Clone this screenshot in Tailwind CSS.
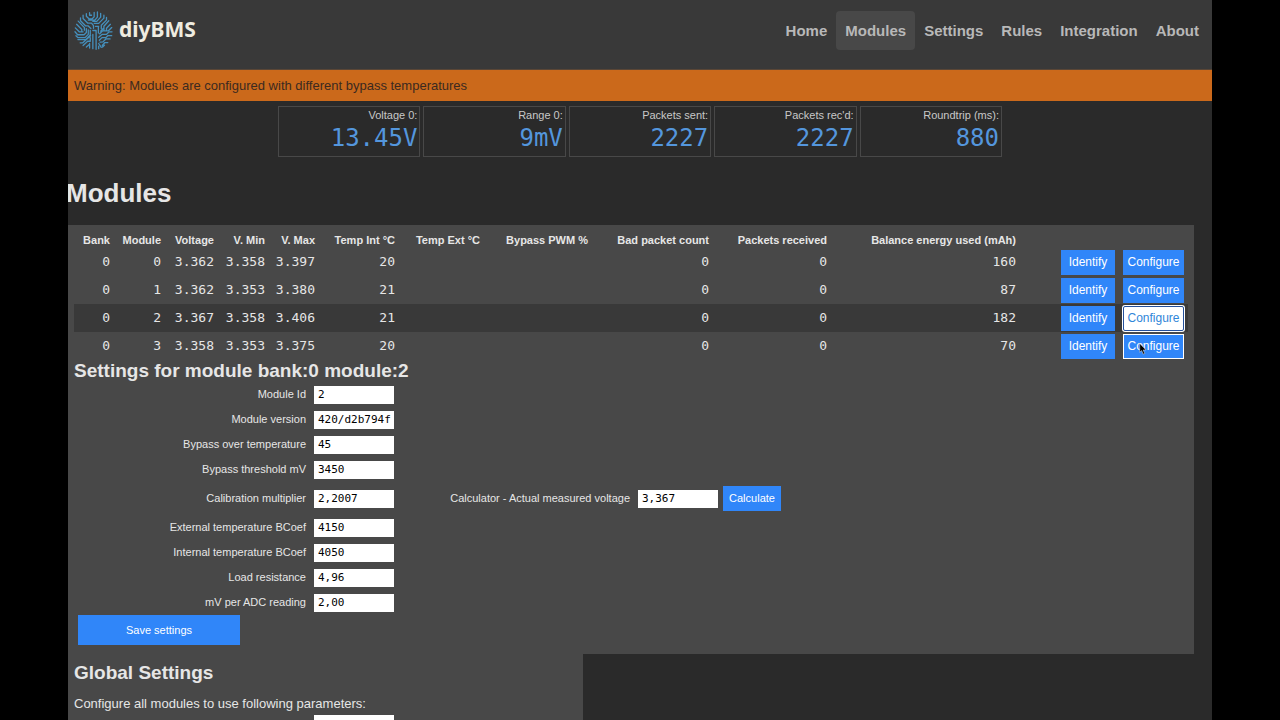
<!DOCTYPE html>
<html lang="en">
<head>
  <meta charset="UTF-8" />
  <meta name="viewport" content="width=device-width, initial-scale=1.0"/>
  <title>diyBMS - Modules</title>
  <script src="https://cdn.jsdelivr.net/npm/@tailwindcss/browser@4"></script>
</head>
<body class="bg-black font-['Liberation_Sans',Arial,sans-serif] text-[#e6e6e6]">
  <div class="mx-[68px] min-h-screen bg-[#2a2a2a] overflow-hidden">

    <!-- Header -->
    <header class="flex items-start justify-between bg-[#393939] border-b border-[#5a4636] h-[70px] pt-[11px] pl-1.5 pr-1">
      <a href="#" class="flex items-start gap-1.5">
        <svg class="size-[39px]" viewBox="0 0 120 120" fill="none" stroke="#4590bd" stroke-width="4" stroke-linecap="round" stroke-linejoin="round" aria-hidden="true">
          <path d="M38 8v8l8 8h10l6-6V4M48 5v8h6M72 3v16l-8 9H44M82 7v12L70 32H58M92 13v9L76 38H62"/>
          <path d="M28 13v10l14 14h12l6 8v8M20 21v9l16 16h8l8 8M13 31l19 20v8M8 41l16 16v6M4 52l12 12h12"/>
          <path d="M100 20v8L84 44v10M107 30l-15 17v12M112 41l-12 12v8M82 62l8-8M116 51l-10 10H88l-9 9"/>
          <path d="M3 64l8 9h20l7-7V54M6 76l6 6h22l10-10V58M12 88h24l14-14V60M19 98h8l24-22M58 60h10v58M28 106l14-13h8V82"/>
          <path d="M75 50v18M66 47h10M117 64h-9l-8 8H86l-10 9M116 76h-12l-6 6H86l-8 8M111 86H98l-9 9-9 1M104 97h-9l-8 9M58 72v44M48 100v14M38 111l10-9M76 100l8 12M76 108v8M94 105l-6 6"/>
        </svg>
        <span class="font-['Noto_Sans','Open_Sans',sans-serif] font-bold text-[21px] leading-9 text-[#efece0]">diyBMS</span>
      </a>
      <nav class="flex text-[15px] leading-[39px] font-bold text-[#b8b8b8]">
        <a href="#" class="px-[9px]">Home</a>
        <a href="#" class="px-[9px] rounded-sm bg-[#484848]">Modules</a>
        <a href="#" class="px-[9px]">Settings</a>
        <a href="#" class="px-[9px]">Rules</a>
        <a href="#" class="px-[9px]">Integration</a>
        <a href="#" class="px-[9px]">About</a>
      </nav>
    </header>

    <div class="bg-[#cb691b] text-[#3b2a20] text-[13px] leading-[31px] pl-1.5">Warning: Modules are configured with different bypass temperatures</div>

    <!-- Totals -->
    <section class="grid grid-cols-5 gap-[3px] w-[724px] mx-auto mt-[5px] text-right">
      <div class="border border-[#484848] h-[51px] px-0.5 pt-px">
        <div class="text-[11px] leading-[14px] text-[#c8c8c8]">Voltage 0:</div>
        <div class="font-['DejaVu_Sans_Mono',monospace] text-2xl leading-8 text-[#5496dd]">13.45V</div>
      </div>
      <div class="border border-[#484848] h-[51px] px-0.5 pt-px">
        <div class="text-[11px] leading-[14px] text-[#c8c8c8]">Range 0:</div>
        <div class="font-['DejaVu_Sans_Mono',monospace] text-2xl leading-8 text-[#5496dd]">9mV</div>
      </div>
      <div class="border border-[#484848] h-[51px] px-0.5 pt-px">
        <div class="text-[11px] leading-[14px] text-[#c8c8c8]">Packets sent:</div>
        <div class="font-['DejaVu_Sans_Mono',monospace] text-2xl leading-8 text-[#5496dd]">2227</div>
      </div>
      <div class="border border-[#484848] h-[51px] px-0.5 pt-px">
        <div class="text-[11px] leading-[14px] text-[#c8c8c8]">Packets rec'd:</div>
        <div class="font-['DejaVu_Sans_Mono',monospace] text-2xl leading-8 text-[#5496dd]">2227</div>
      </div>
      <div class="border border-[#484848] h-[51px] px-0.5 pt-px">
        <div class="text-[11px] leading-[14px] text-[#c8c8c8]">Roundtrip (ms):</div>
        <div class="font-['DejaVu_Sans_Mono',monospace] text-2xl leading-8 text-[#5496dd]">880</div>
      </div>
    </section>

    <h1 class="text-[26px] leading-8 font-bold -ml-0.5 mt-5 mb-4">Modules</h1>

    <!-- Module list -->
    <section class="bg-[#484848] mr-[18px] px-1.5 pt-2 pb-[9px]">
      <table class="table-fixed w-full text-right">
        <colgroup>
          <col class="w-[40px]"><col class="w-[51px]"><col class="w-[53px]"><col class="w-[51px]"><col class="w-[50px]">
          <col class="w-[80px]"><col class="w-[85px]"><col class="w-[108px]"><col class="w-[121px]"><col class="w-[118px]">
          <col class="w-[189px]"><col class="w-[99px]"><col>
        </colgroup>
        <thead class="text-[11px] leading-[15px] whitespace-nowrap">
          <tr>
            <th class="pr-1">Bank</th>
            <th class="pr-1">Module</th>
            <th class="pr-1">Voltage</th>
            <th class="pr-1">V. Min</th>
            <th class="pr-1">V. Max</th>
            <th class="pr-1">Temp Int °C</th>
            <th class="pr-1">Temp Ext °C</th>
            <th class="pr-1">Bypass PWM %</th>
            <th class="pr-1">Bad packet count</th>
            <th class="pr-1">Packets received</th>
            <th class="pr-1">Balance energy used (mAh)</th>
            <th></th>
            <th></th>
          </tr>
        </thead>
        <tbody class="font-['DejaVu_Sans_Mono',monospace] text-[13px]">
          <tr class="h-7">
            <td class="pr-1">0</td><td class="pr-1">0</td><td class="pr-1">3.362</td><td class="pr-1">3.358</td><td class="pr-1">3.397</td>
            <td class="pr-1">20</td><td></td><td></td><td class="pr-1">0</td><td class="pr-1">0</td><td class="pr-1">160</td>
            <td class="pr-1"><button class="block ml-auto w-[54px] h-[25px] bg-[#3086f9] text-white font-['Liberation_Sans',sans-serif] text-xs">Identify</button></td>
            <td class="pr-1"><button class="block ml-auto w-[61px] h-[25px] bg-[#3086f9] text-white font-['Liberation_Sans',sans-serif] text-xs">Configure</button></td>
          </tr>
          <tr class="h-7">
            <td class="pr-1">0</td><td class="pr-1">1</td><td class="pr-1">3.362</td><td class="pr-1">3.353</td><td class="pr-1">3.380</td>
            <td class="pr-1">21</td><td></td><td></td><td class="pr-1">0</td><td class="pr-1">0</td><td class="pr-1">87</td>
            <td class="pr-1"><button class="block ml-auto w-[54px] h-[25px] bg-[#3086f9] text-white font-['Liberation_Sans',sans-serif] text-xs">Identify</button></td>
            <td class="pr-1"><button class="block ml-auto w-[61px] h-[25px] bg-[#3086f9] text-white font-['Liberation_Sans',sans-serif] text-xs">Configure</button></td>
          </tr>
          <tr class="h-7 bg-[#393939]">
            <td class="pr-1">0</td><td class="pr-1">2</td><td class="pr-1">3.367</td><td class="pr-1">3.358</td><td class="pr-1">3.406</td>
            <td class="pr-1">21</td><td></td><td></td><td class="pr-1">0</td><td class="pr-1">0</td><td class="pr-1">182</td>
            <td class="pr-1"><button class="block ml-auto w-[54px] h-[25px] bg-[#3086f9] text-white font-['Liberation_Sans',sans-serif] text-xs">Identify</button></td>
            <td class="pr-1"><button class="block ml-auto w-[61px] h-[25px] rounded-xs bg-white border border-[#24509c] ring-1 ring-white text-[#3086d9] font-['Liberation_Sans',sans-serif] text-xs">Configure</button></td>
          </tr>
          <tr class="h-7">
            <td class="pr-1">0</td><td class="pr-1">3</td><td class="pr-1">3.358</td><td class="pr-1">3.353</td><td class="pr-1">3.375</td>
            <td class="pr-1">20</td><td></td><td></td><td class="pr-1">0</td><td class="pr-1">0</td><td class="pr-1">70</td>
            <td class="pr-1"><button class="block ml-auto w-[54px] h-[25px] bg-[#3086f9] text-white font-['Liberation_Sans',sans-serif] text-xs">Identify</button></td>
            <td class="pr-1">
              <button class="relative block ml-auto w-[61px] h-[25px] bg-[#3086f9] border border-white text-white font-['Liberation_Sans',sans-serif] text-xs">Configure
                <!-- mouse pointer -->
                <svg class="absolute left-[15px] top-2 w-2 h-3" viewBox="0 0 7 11" aria-hidden="true"><path d="M.5.5v8l1.8-1.6 1.3 3.3 1.5-.6-1.4-3.2h2.6z" fill="#000" stroke="#ddd" stroke-width=".5"/></svg>
              </button>
            </td>
          </tr>
        </tbody>
      </table>

      <!-- Settings of the selected module -->
      <h2 class="text-[19px] leading-[22px] font-bold">Settings for module bank:0 module:2</h2>
      <form class="text-[11px]">
        <div class="flex items-center gap-2 h-[25px]">
          <label for="moduleId" class="w-[232px] text-right">Module Id</label>
          <input id="moduleId" value="2" class="w-20 h-[18px] px-1 bg-white text-black font-['DejaVu_Sans_Mono',monospace]">
        </div>
        <div class="flex items-center gap-2 h-[25px]">
          <label for="version" class="w-[232px] text-right">Module version</label>
          <input id="version" value="420/d2b794f" class="w-20 h-[18px] pl-1 bg-white text-black font-['DejaVu_Sans_Mono',monospace]">
        </div>
        <div class="flex items-center gap-2 h-[25px]">
          <label for="bypassTemp" class="w-[232px] text-right">Bypass over temperature</label>
          <input id="bypassTemp" value="45" class="w-20 h-[18px] px-1 bg-white text-black font-['DejaVu_Sans_Mono',monospace]">
        </div>
        <div class="flex items-center gap-2 h-[25px]">
          <label for="bypassMv" class="w-[232px] text-right">Bypass threshold mV</label>
          <input id="bypassMv" value="3450" class="w-20 h-[18px] px-1 bg-white text-black font-['DejaVu_Sans_Mono',monospace]">
        </div>
        <div class="flex items-center gap-2 h-[33px]">
          <label for="calib" class="w-[232px] text-right">Calibration multiplier</label>
          <input id="calib" value="2,2007" class="w-20 h-[18px] px-1 bg-white text-black font-['DejaVu_Sans_Mono',monospace]">
          <label for="measured" class="w-[228px] text-right">Calculator - Actual measured voltage</label>
          <div class="flex items-center gap-[5px]">
            <input id="measured" value="3,367" class="w-20 h-[18px] px-1 bg-white text-black font-['DejaVu_Sans_Mono',monospace]">
            <button type="button" class="w-[58px] h-[25px] bg-[#3086f9] text-white">Calculate</button>
          </div>
        </div>
        <div class="flex items-center gap-2 h-[25px]">
          <label for="extB" class="w-[232px] text-right">External temperature BCoef</label>
          <input id="extB" value="4150" class="w-20 h-[18px] px-1 bg-white text-black font-['DejaVu_Sans_Mono',monospace]">
        </div>
        <div class="flex items-center gap-2 h-[25px]">
          <label for="intB" class="w-[232px] text-right">Internal temperature BCoef</label>
          <input id="intB" value="4050" class="w-20 h-[18px] px-1 bg-white text-black font-['DejaVu_Sans_Mono',monospace]">
        </div>
        <div class="flex items-center gap-2 h-[25px]">
          <label for="loadRes" class="w-[232px] text-right">Load resistance</label>
          <input id="loadRes" value="4,96" class="w-20 h-[18px] px-1 bg-white text-black font-['DejaVu_Sans_Mono',monospace]">
        </div>
        <div class="flex items-center gap-2 h-[25px]">
          <label for="mvAdc" class="w-[232px] text-right">mV per ADC reading</label>
          <input id="mvAdc" value="2,00" class="w-20 h-[18px] px-1 bg-white text-black font-['DejaVu_Sans_Mono',monospace]">
        </div>
        <button type="button" class="block ml-1 w-[162px] h-[30px] bg-[#3086f9] text-white">Save settings</button>
      </form>
    </section>

    <!-- Global settings -->
    <section class="bg-[#484848] w-[45%] pl-1.5 pt-2">
      <h2 class="text-[19px] leading-[22px] font-bold">Global Settings</h2>
      <p class="text-[13px] leading-5 mt-2.5 mb-px">Configure all modules to use following parameters:</p>
      <form class="flex items-center gap-2 h-[18px] text-[11px]">
        <label for="globalTemp" class="w-[232px] text-right">Bypass over temperature</label>
        <input id="globalTemp" class="w-20 h-[18px] px-1 bg-white text-black font-['DejaVu_Sans_Mono',monospace]">
      </form>
    </section>

  </div>
</body>
</html>
